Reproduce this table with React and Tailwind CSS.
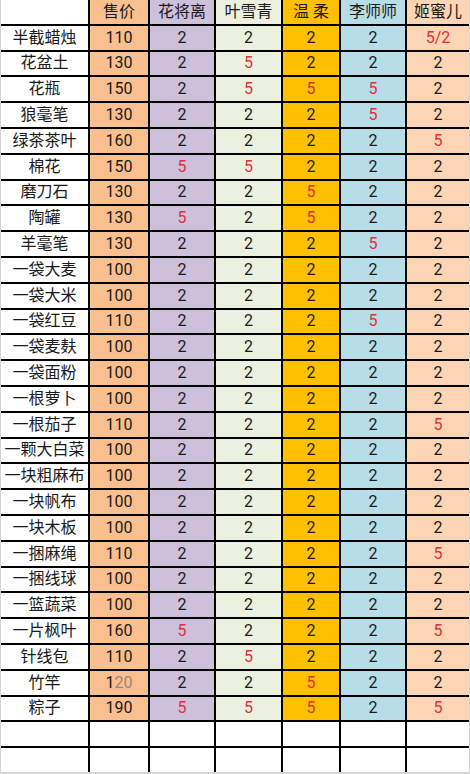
import React from 'react';

// column colours (excel palette)
const colBg = [
  'bg-white',
  'bg-[#fabf8f]',
  'bg-[#ccc0da]',
  'bg-[#ebf1de]',
  'bg-[#ffc000]',
  'bg-[#b7dee8]',
  'bg-[#fcd5b4]',
];

const headers = ['', '售价', '花将离', '叶雪青', '温 柔', '李师师', '姬蜜儿'];

const rows = [
  ['半截蜡烛', '110', '2', '2', '2', '2', '5/2'],
  ['花盆土', '130', '2', '5', '2', '2', '2'],
  ['花瓶', '150', '2', '5', '5', '5', '2'],
  ['狼毫笔', '130', '2', '2', '2', '5', '2'],
  ['绿茶茶叶', '160', '2', '2', '2', '2', '5'],
  ['棉花', '150', '5', '5', '2', '2', '2'],
  ['磨刀石', '130', '2', '2', '5', '2', '2'],
  ['陶罐', '130', '5', '2', '5', '2', '2'],
  ['羊毫笔', '130', '2', '2', '2', '5', '2'],
  ['一袋大麦', '100', '2', '2', '2', '2', '2'],
  ['一袋大米', '100', '2', '2', '2', '2', '2'],
  ['一袋红豆', '110', '2', '2', '2', '5', '2'],
  ['一袋麦麸', '100', '2', '2', '2', '2', '2'],
  ['一袋面粉', '100', '2', '2', '2', '2', '2'],
  ['一根萝卜', '100', '2', '2', '2', '2', '2'],
  ['一根茄子', '110', '2', '2', '2', '2', '5'],
  ['一颗大白菜', '100', '2', '2', '2', '2', '2'],
  ['一块粗麻布', '100', '2', '2', '2', '2', '2'],
  ['一块帆布', '100', '2', '2', '2', '2', '2'],
  ['一块木板', '100', '2', '2', '2', '2', '2'],
  ['一捆麻绳', '110', '2', '2', '2', '2', '5'],
  ['一捆线球', '100', '2', '2', '2', '2', '2'],
  ['一篮蔬菜', '100', '2', '2', '2', '2', '2'],
  ['一片枫叶', '160', '5', '2', '2', '2', '5'],
  ['针线包', '110', '2', '5', '2', '2', '2'],
  ['竹竿', '120', '2', '2', '5', '2', '2'],
  ['粽子', '190', '5', '5', '5', '2', '5'],
];

const Cell = ({ value, col }) => {
  let content = value;
  if (col > 1 && value !== '2') {
    content = <span className="text-[#e0303a]">{value}</span>;
  }
  if (col === 1 && value === '120') {
    // half-faded number in the source sheet
    content = (
      <>
        1<span className="text-[#9a8878]">20</span>
      </>
    );
  }
  return (
    <div className={`${colBg[col]} flex items-center justify-center`}>
      {content}
    </div>
  );
};

const App = () => {
  return (
    <div className="w-[470px] h-[774px] bg-white font-['Roboto','Noto_Sans_CJK_SC',sans-serif] text-[16px] leading-none text-[#1a1a1a]">
      <div className="h-[772px] grid grid-cols-[87px_58px_64px_65px_56px_64px_1fr] grid-rows-[repeat(30,minmax(0,1fr))] gap-[2px] bg-black border-l border-r border-[#d4d4d4]">
        {headers.map((h, i) => (
          <div key={'h' + i} className={`${colBg[i]} flex items-center justify-center`}>
            {h}
          </div>
        ))}
        {rows.map((r, ri) =>
          r.map((v, ci) => <Cell key={ri + '-' + ci} value={v} col={ci} />)
        )}
        {[0, 1].map((ri) =>
          headers.map((_, ci) => <div key={'e' + ri + ci} className="bg-white" />)
        )}
      </div>
      <div className="h-[2px] bg-[#d4d4d4]" />
    </div>
  );
};

export default App;
